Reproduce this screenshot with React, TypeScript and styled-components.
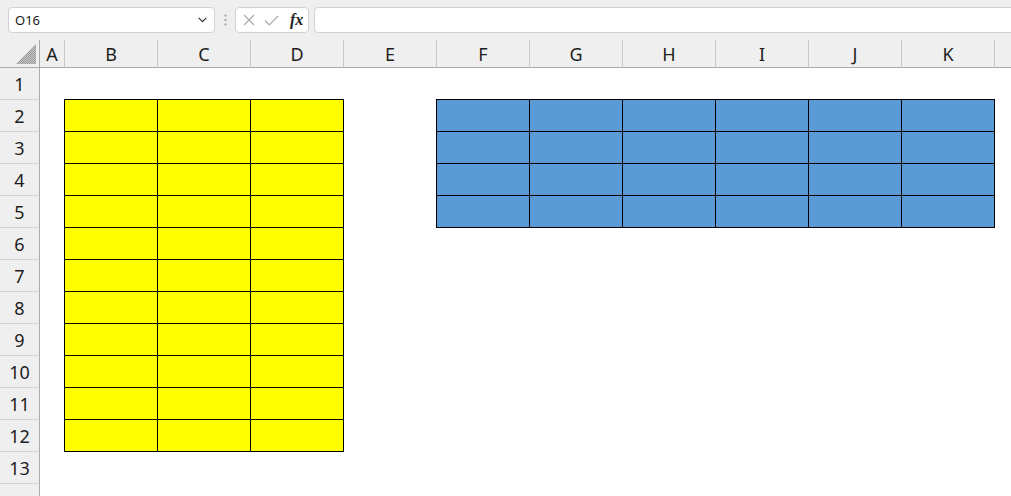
import React from "react";
import styled, { createGlobalStyle } from "styled-components";

const Global = createGlobalStyle`
  html, body { margin: 0; padding: 0; background: #ffffff; overflow: hidden; }
  body { font-family: "Noto Sans", "Open Sans", sans-serif; }
`;

const Page = styled.div`
  width: 1011px;
  height: 496px;
  overflow: hidden;
  background: #ffffff;
`;

const Toolbar = styled.div`
  height: 40px;
  background: #efefef;
  display: flex;
  align-items: center;
  padding-left: 8px;
  box-sizing: border-box;
`;

const NameBox = styled.div`
  box-sizing: border-box;
  width: 207px;
  height: 26px;
  background: #fff;
  border: 1px solid #d3d3d3;
  border-radius: 4px;
  display: flex;
  align-items: center;
  justify-content: space-between;
  padding: 0 7px 0 6px;
  font-size: 13px;
  color: #1a1a1a;
`;

const Dots = styled.div`
  width: 20px;
  display: flex;
  justify-content: center;
`;

const FxBox = styled.div`
  box-sizing: border-box;
  width: 74px;
  height: 26px;
  background: #fff;
  border: 1px solid #d3d3d3;
  border-radius: 4px;
  display: flex;
  align-items: center;
  padding-left: 7px;
  gap: 9px;
`;

const Fx = styled.span`
  font-family: "Liberation Serif", "DejaVu Serif", serif;
  font-style: italic;
  font-weight: 700;
  font-size: 16px;
  color: #222;
  margin-left: 2px;
`;

const FormulaBar = styled.div`
  box-sizing: border-box;
  flex: 1;
  height: 26px;
  margin-left: 5px;
  margin-right: -12px;
  background: #fff;
  border: 1px solid #d3d3d3;
  border-radius: 4px;
`;

const Sheet = styled.div`
  display: grid;
  grid-template-columns: 40px 25px repeat(11, 93px);
  grid-template-rows: 28px repeat(14, 32px);
  overflow: hidden;
  width: 1011px;
`;

const Corner = styled.div`
  grid-column: 1;
  grid-row: 1;
  box-sizing: border-box;
  background: #efefef;
  border-right: 1px solid #ababab;
  border-bottom: 1px solid #ababab;
  display: flex;
  align-items: flex-end;
  justify-content: flex-end;
  padding: 0 3px 3px 0;
`;

const ColHeader = styled.div<{ $col: number }>`
  grid-column: ${(p) => p.$col};
  grid-row: 1;
  box-sizing: border-box;
  background: #efefef;
  border-right: 1px solid #c9c9c9;
  border-bottom: 1px solid #ababab;
  display: flex;
  align-items: center;
  justify-content: center;
  font-size: 18px;
  color: #1e1e1e;
  padding-top: 1px;
`;

const RowHeader = styled.div<{ $row: number }>`
  grid-column: 1;
  grid-row: ${(p) => p.$row};
  box-sizing: border-box;
  background: #efefef;
  border-right: 1px solid #ababab;
  border-bottom: 1px solid #d2d2d2;
  display: flex;
  align-items: center;
  justify-content: center;
  font-size: 18px;
  color: #1e1e1e;
  padding-top: 1px;
`;

const Table = styled.div<{
  $cols: string;
  $rows: string;
  $count: number;
  $fill: string;
}>`
  grid-column: ${(p) => p.$cols};
  grid-row: ${(p) => p.$rows};
  margin: -1px 0 0 -1px;
  display: grid;
  grid-template-columns: repeat(${(p) => p.$count}, 1fr);
  grid-auto-rows: 1fr;
  background: ${(p) => p.$fill};
  border-left: 1px solid #000;
  border-top: 1px solid #000;
`;

const Cell = styled.div`
  border-right: 1px solid #000;
  border-bottom: 1px solid #000;
`;

const Chevron = () => (
  <svg width="9" height="6" viewBox="0 0 9 6">
    <polyline points="0.7,0.8 4.5,4.6 8.3,0.8" fill="none" stroke="#333" strokeWidth="1.2" />
  </svg>
);

const VDots = () => (
  <svg width="3" height="12" viewBox="0 0 3 12">
    <rect x="0.5" y="0.5" width="2" height="2" fill="#a3a3a3" />
    <rect x="0.5" y="5" width="2" height="2" fill="#a3a3a3" />
    <rect x="0.5" y="9.5" width="2" height="2" fill="#a3a3a3" />
  </svg>
);

const Cross = () => (
  <svg width="12" height="12" viewBox="0 0 12 12">
    <path d="M1 1 L11 11 M11 1 L1 11" stroke="#a8a8a8" strokeWidth="1.1" fill="none" />
  </svg>
);

const Check = () => (
  <svg width="15" height="11" viewBox="0 0 15 11">
    <path d="M1 5.5 L5.3 10 L14 1" stroke="#a8a8a8" strokeWidth="1.1" fill="none" />
  </svg>
);

const SelectAll = () => (
  <svg width="20" height="20" viewBox="0 0 20 20">
    <defs>
      <pattern id="dots" width="2" height="2" patternUnits="userSpaceOnUse">
        <rect width="2" height="2" fill="#c4c4c4" />
        <rect width="1" height="1" fill="#9c9c9c" />
        <rect x="1" y="1" width="1" height="1" fill="#9c9c9c" />
      </pattern>
    </defs>
    <polygon points="20,0 20,20 0,20" fill="url(#dots)" />
  </svg>
);

const cols = ["A", "B", "C", "D", "E", "F", "G", "H", "I", "J", "K", ""];
const rows = Array.from({ length: 14 }, (_, i) => i + 1);

export default function App() {
  return (
    <Page>
      <Global />
      <Toolbar>
        <NameBox>
          <span>O16</span>
          <Chevron />
        </NameBox>
        <Dots>
          <VDots />
        </Dots>
        <FxBox>
          <Cross />
          <Check />
          <Fx>fx</Fx>
        </FxBox>
        <FormulaBar />
      </Toolbar>
      <Sheet>
        <Corner>
          <SelectAll />
        </Corner>
        {cols.map((c, i) => (
          <ColHeader key={i} $col={i + 2}>
            {c}
          </ColHeader>
        ))}
        {rows.map((r) => (
          <RowHeader key={r} $row={r + 1}>
            {r <= 13 ? r : ""}
          </RowHeader>
        ))}
        <Table $cols="3 / 6" $rows="3 / 14" $count={3} $fill="#ffff00">
          {Array.from({ length: 33 }, (_, i) => (
            <Cell key={i} />
          ))}
        </Table>
        <Table $cols="7 / 13" $rows="3 / 7" $count={6} $fill="#5b9bd5">
          {Array.from({ length: 24 }, (_, i) => (
            <Cell key={i} />
          ))}
        </Table>
      </Sheet>
    </Page>
  );
}
